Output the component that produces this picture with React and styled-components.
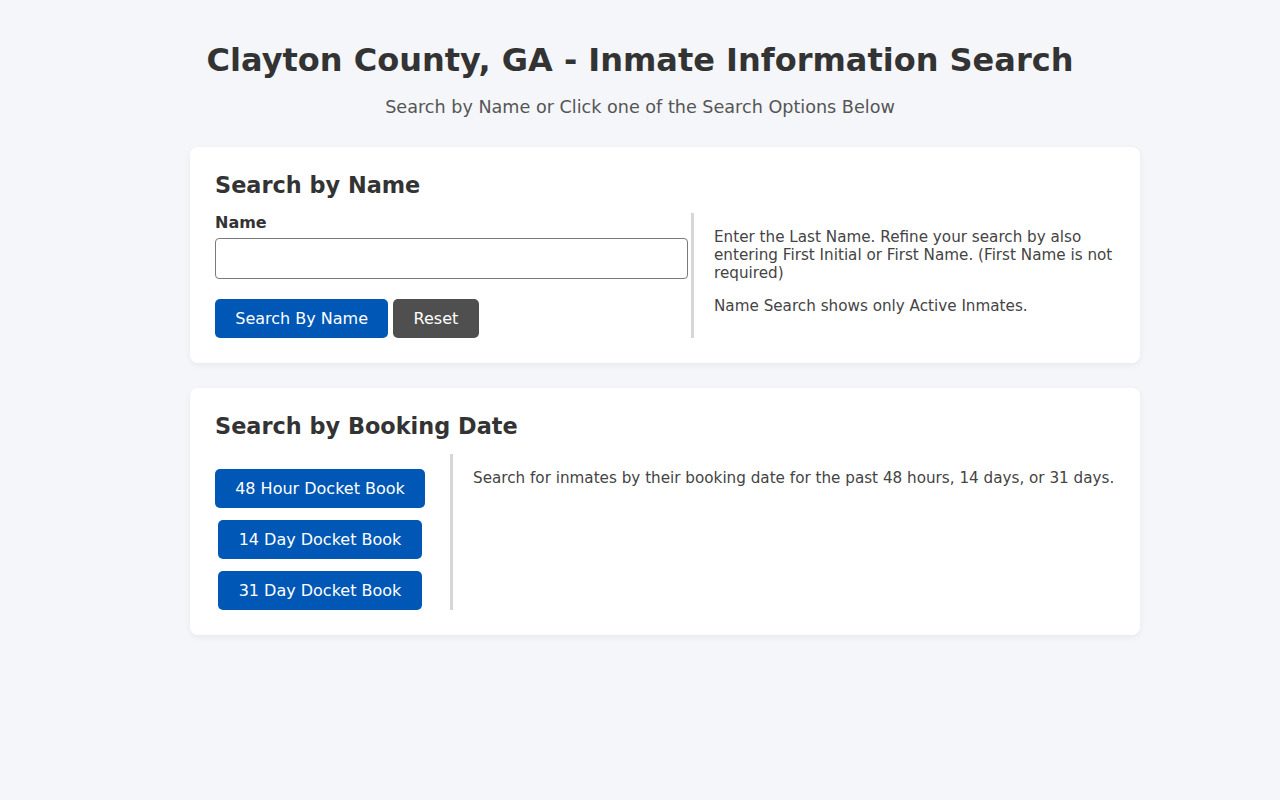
import React from "react";
import styled, { createGlobalStyle } from "styled-components";

const GlobalStyle = createGlobalStyle`
  html, body { margin: 0; padding: 0; }
  body {
    background: #f4f6f9;
    font-family: "DejaVu Sans", "Liberation Sans", sans-serif;
    color: #333;
  }
  * { box-sizing: border-box; }
`;

const Page = styled.div`
  padding: 42px 0 40px;
`;

const Header = styled.header`
  text-align: center;
  margin-bottom: 30px;
`;

const Title = styled.h1`
  margin: 0;
  font-size: 32px;
  line-height: 37px;
  font-weight: bold;
  color: #333;
`;

const Subtitle = styled.p`
  margin: 18px 0 0;
  font-size: 17.6px;
  line-height: 20px;
  color: #555;
`;

const Main = styled.main`
  max-width: 1000px;
  margin: 0 auto;
  padding-left: 50px;
`;

const Card = styled.section`
  background: #fff;
  border-radius: 8px;
  box-shadow: 0 2px 6px rgba(0, 0, 0, 0.06);
  padding: 25px;
  & + & { margin-top: 25px; }
`;

const CardTitle = styled.h2`
  margin: 0 0 15px;
  font-size: 22.4px;
  line-height: 26px;
  font-weight: bold;
  color: #333;
`;

const Row = styled.div`
  display: flex;
  align-items: stretch;
  gap: ${(p) => p.$gap}px;
`;

const FormCol = styled.div`
  flex: 0 0 ${(p) => p.$width}px;
  min-width: 0;
  display: flex;
  flex-direction: column;
`;

const ButtonCol = styled.div`
  flex: 0 0 ${(p) => p.$width}px;
  min-width: 0;
  display: flex;
  flex-direction: column;
  align-items: center;
  gap: 12px;
  padding-top: 15px;
`;

const InfoCol = styled.div`
  flex: 1;
  border-left: 3px solid #d6d6d6;
  padding-left: 20px;
`;

const Info = styled.p`
  margin: 15px 0;
  font-size: 15.2px;
  line-height: 18px;
  color: #444;
`;

const Label = styled.label`
  font-size: 16px;
  line-height: 19px;
  font-weight: bold;
  color: #333;
  margin-bottom: 6px;
`;

const Input = styled.input`
  width: 100%;
  height: 41px;
  border: 1px solid #7a7a7a;
  border-radius: 4px;
  padding: 8px 10px;
  font-size: 16px;
  font-family: inherit;
  background: #fff;
`;

const Buttons = styled.div`
  display: flex;
  gap: 5px;
  margin-top: 20px;
`;

const Button = styled.button`
  border: none;
  border-radius: 5px;
  padding: 10px 20.25px;
  font-family: inherit;
  font-size: 16px;
  line-height: 19px;
  color: #fff;
  background: ${(p) => (p.$secondary ? "#4f4f4f" : "#0057b5")};
  cursor: pointer;
  white-space: nowrap;
`;

export default function App() {
  return (
    <>
      <GlobalStyle />
      <Page>
        <Header>
          <Title>Clayton County, GA - Inmate Information Search</Title>
          <Subtitle>Search by Name or Click one of the Search Options Below</Subtitle>
        </Header>

        <Main>
          <Card>
            <CardTitle>Search by Name</CardTitle>
            <Row $gap={3}>
              <FormCol $width={473}>
                <Label htmlFor="name">Name</Label>
                <Input id="name" type="text" />
                <Buttons>
                  <Button>Search By Name</Button>
                  <Button $secondary>Reset</Button>
                </Buttons>
              </FormCol>
              <InfoCol>
                <Info>
                  Enter the Last Name. Refine your search by also entering First
                  Initial or First Name. (First Name is not required)
                </Info>
                <Info>Name Search shows only Active Inmates.</Info>
              </InfoCol>
            </Row>
          </Card>

          <Card>
            <CardTitle>Search by Booking Date</CardTitle>
            <Row $gap={25}>
              <ButtonCol $width={210}>
                <Button>48 Hour Docket Book</Button>
                <Button>14 Day Docket Book</Button>
                <Button>31 Day Docket Book</Button>
              </ButtonCol>
              <InfoCol>
                <Info>
                  Search for inmates by their booking date for the past 48 hours,
                  14 days, or 31 days.
                </Info>
              </InfoCol>
            </Row>
          </Card>
        </Main>
      </Page>
    </>
  );
}
